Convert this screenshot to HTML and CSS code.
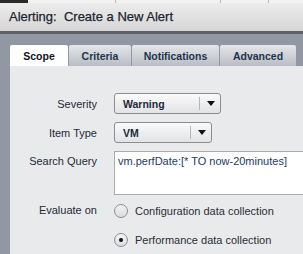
FILE: index.html
```html
<!DOCTYPE html>
<html lang="en">
<head>
    <meta charset="UTF-8">
    <title>Alerting</title>
    <link rel="stylesheet" href="styles.css">
</head>
<body>
    <div class="topstrip">
        <div class="seg seg-dark"></div>
        <div class="seg seg-a"></div>
        <div class="seg seg-b"></div>
        <div class="seg seg-c"></div>
        <div class="seg seg-d"></div>
    </div>
    <div class="header">Alerting:&nbsp; Create a New Alert</div>
    <div class="rule"></div>

    <div class="body">
        <div class="tabs">
            <div class="tab active t-scope">Scope</div>
            <div class="tab t-criteria">Criteria</div>
            <div class="tab t-notif">Notifications</div>
            <div class="tab t-adv">Advanced</div>
        </div>

        <div class="panel">
            <div class="row">
                <label class="lbl">Severity</label>
                <div class="select sel-sev">
                    <span class="val">Warning</span>
                    <span class="arrow"></span>
                </div>
            </div>
            <div class="row">
                <label class="lbl">Item Type</label>
                <div class="select sel-type">
                    <span class="val">VM</span>
                    <span class="arrow"></span>
                </div>
            </div>
            <div class="row row-top">
                <label class="lbl">Search Query</label>
                <div class="query">vm.perfDate:[* TO now-20minutes]</div>
            </div>
            <div class="row row-radio">
                <label class="lbl">Evaluate on</label>
                <div class="radios">
                    <div class="opt"><span class="radio"></span>Configuration data collection</div>
                    <div class="opt"><span class="radio on"></span>Performance data collection</div>
                </div>
            </div>
        </div>
    </div>
</body>
</html>
```

FILE: styles.css
```css
body {
    margin: 0;
    width: 303px;
    height: 254px;
    overflow: hidden;
    font-family: "Liberation Sans", Arial, sans-serif;
    background: #9298a3;
}

/* strip of the page above */
.topstrip {
    display: flex;
    height: 3px;
    background: #f2f2f2;
}
.seg { height: 3px; border-right: 1px solid #b8b8b8; }
.seg-dark { width: 28px; background: #2a2a2a; border: none; }
.seg-a { width: 87px; }
.seg-b { width: 104px; }
.seg-c { width: 47px; }
.seg-d { flex: 1; border: none; }

.header {
    height: 28px;
    line-height: 27px;
    padding-left: 9px;
    font-size: 13px;
    color: #1b2531;
    -webkit-text-stroke: 0.25px #1b2531;
    background: linear-gradient(#ececec, #d6d6d6);
}
.rule {
    height: 3px;
    background: #5d6068;
}

.body {
    padding: 11px 0 0 10px;
}

.tabs {
    display: flex;
    height: 21px;
}
.tab {
    box-sizing: border-box;
    height: 21px;
    margin-right: 1px;
    text-align: center;
    font-size: 10.5px;
    font-weight: bold;
    line-height: 22px;
    color: #1d3550;
    background: linear-gradient(#e4e6e9, #b9bdc3);
    border-radius: 2px 2px 0 0;
}
.tab.active {
    background: #fff;
    color: #10151c;
}
.t-scope { width: 58px; }
.t-criteria { width: 62px; }
.t-notif { width: 87px; }
.t-adv { width: 76px; }

.panel {
    box-sizing: border-box;
    background: #e9eaec;
    height: 188px;
    padding-top: 27px;
}

.row {
    display: flex;
    align-items: center;
    margin-bottom: 8px;
}
.row-top { align-items: flex-start; }
.lbl {
    width: 87px;
    text-align: right;
    padding-right: 17px;
    font-size: 11px;
    color: #1e2a36;
}
.row-top .lbl { padding-top: 4px; }

.select {
    box-sizing: border-box;
    display: flex;
    align-items: center;
    height: 21px;
    border: 1px solid #8a8d92;
    border-radius: 3px;
    background: linear-gradient(#fafafa, #e2e3e5);
}
.sel-sev { width: 107px; }
.sel-type { width: 98px; }
.val {
    flex: 1;
    padding-left: 8px;
    font-size: 10.5px;
    font-weight: bold;
    color: #1b2a3c;
}
.arrow {
    position: relative;
    width: 20px;
    height: 13px;
    border-left: 1px solid #b4b6ba;
}
.arrow::after {
    content: "";
    position: absolute;
    left: 7px;
    top: 4px;
    border-left: 4px solid transparent;
    border-right: 4px solid transparent;
    border-top: 5px solid #111;
}

.query {
    box-sizing: border-box;
    flex: 1;
    height: 44px;
    padding: 3px 0 0 3px;
    background: #fff;
    border: 1px solid #a9abae;
    border-right: none;
    font-size: 11px;
    color: #1d3a66;
}

.row-radio { align-items: flex-start; margin-top: 9px; }
.row-radio .lbl { padding-top: 0; }
.radios { display: flex; flex-direction: column; gap: 15px; }
.opt {
    display: flex;
    align-items: center;
    font-size: 11px;
    color: #2a2e35;
}
.radio {
    box-sizing: border-box;
    position: relative;
    width: 14px;
    height: 14px;
    margin-right: 7px;
    border: 1px solid #8c8e92;
    border-radius: 50%;
    background: linear-gradient(#f4f4f4, #dcdde0);
}
.radio.on::after {
    content: "";
    position: absolute;
    left: 4px;
    top: 4px;
    width: 4px;
    height: 4px;
    border-radius: 50%;
    background: #111;
}
```
